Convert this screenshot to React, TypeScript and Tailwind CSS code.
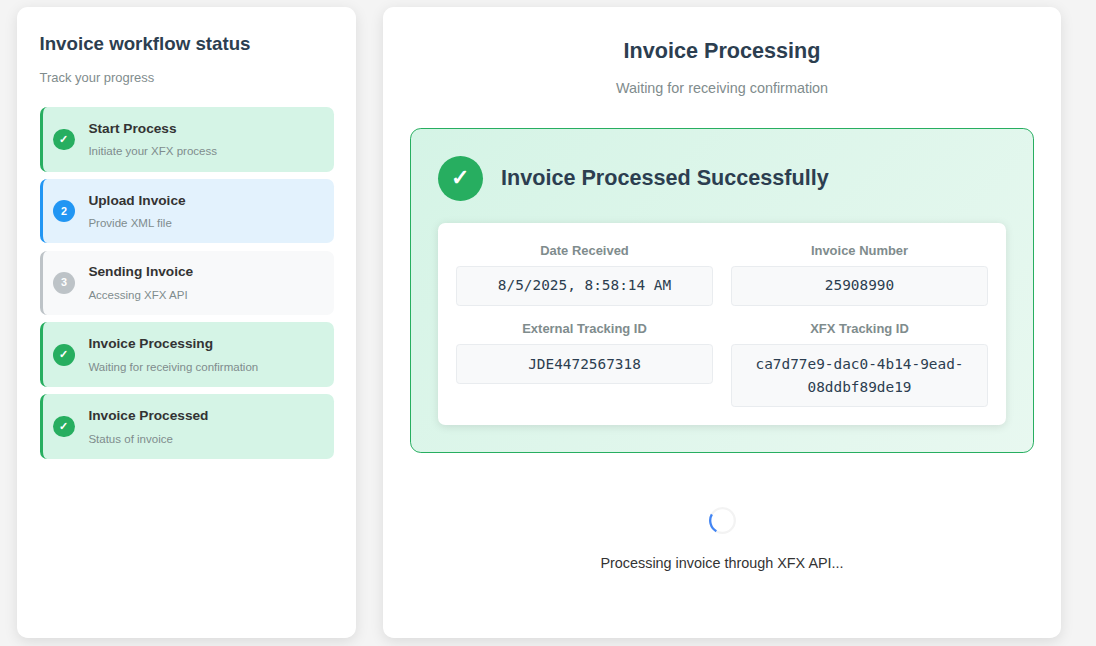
type StepState = 'done' | 'active' | 'pending';

interface Step {
  title: string;
  description: string;
  state: StepState;
}

const steps: Step[] = [
  { title: 'Start Process', description: 'Initiate your XFX process', state: 'done' },
  { title: 'Upload Invoice', description: 'Provide XML file', state: 'active' },
  { title: 'Sending Invoice', description: 'Accessing XFX API', state: 'pending' },
  { title: 'Invoice Processing', description: 'Waiting for receiving confirmation', state: 'done' },
  { title: 'Invoice Processed', description: 'Status of invoice', state: 'done' },
];

const rowStyles: Record<StepState, string> = {
  done: 'border-[#27ae60] bg-[#d5f4e6]',
  active: 'border-[#2196f3] bg-[#e3f2fd]',
  pending: 'border-[#bdc3c7] bg-[#f8f9fa]',
};

const badgeStyles: Record<StepState, string> = {
  done: 'bg-[#27ae60] pr-px',
  active: 'bg-[#2196f3]',
  pending: 'bg-[#bdc3c7]',
};

const details = [
  { label: 'Date Received', value: '8/5/2025, 8:58:14 AM' },
  { label: 'Invoice Number', value: '25908990' },
  { label: 'External Tracking ID', value: 'JDE4472567318' },
  { label: 'XFX Tracking ID', value: 'ca7d77e9-dac0-4b14-9ead-08ddbf89de19' },
];

function StepRow({ step, index }: { step: Step; index: number }) {
  return (
    <li
      className={`flex items-center gap-[13.5px] rounded-[7.2px] border-l-[3px] p-[10.8px] ${rowStyles[step.state]}`}
    >
      <span
        className={`flex size-[21.6px] shrink-0 items-center justify-center rounded-full text-[10.8px] font-bold text-white ${badgeStyles[step.state]}`}
      >
        {step.state === 'done' ? '✓' : index + 1}
      </span>
      <div>
        <h4 className="mb-[2.7px] text-[13.68px] font-bold text-[#333]">{step.title}</h4>
        <p className="text-[11.52px] text-[#7f8c8d]">{step.description}</p>
      </div>
    </li>
  );
}

function Sidebar() {
  return (
    <aside className="w-[339px] shrink-0 rounded-[10.8px] bg-white px-[22.5px] pb-[22.5px] pt-[21.8px] shadow-[0_3.6px_13.5px_rgba(0,0,0,0.1)]">
      <h2 className="text-[18.72px] font-bold text-[#2c3e50]">Invoice workflow status</h2>
      <p className="mb-[18.15px] mt-[9.3px] text-[12.96px] text-[#7f8c8d]">Track your progress</p>
      <ul className="flex flex-col gap-[7.2px]">
        {steps.map((step, index) => (
          <StepRow key={step.title} step={step} index={index} />
        ))}
      </ul>
    </aside>
  );
}

function ResultCard() {
  return (
    <section className="rounded-[10.8px] border border-[#27ae60] bg-[linear-gradient(135deg,#d5f4e6,#e8f8f0)] p-[27px]">
      <div className="mb-[22.5px] flex items-center gap-[18px]">
        <span className="flex size-[45px] items-center justify-center rounded-full bg-[#27ae60] pr-px text-[21.6px] font-bold text-white">
          ✓
        </span>
        <h3 className="text-[21.6px] font-bold text-[#2c3e50]">Invoice Processed Successfully</h3>
      </div>
      <dl className="grid grid-cols-2 items-start gap-x-[18px] gap-y-[13.6px] rounded-[7.2px] bg-white p-[18px] text-center shadow-[0_1.8px_9px_rgba(0,0,0,0.1)]">
        {details.map((item) => (
          <div key={item.label} className="flex flex-col gap-[4px]">
            <dt className="text-[12.96px] font-bold text-[#7f8c8d]">{item.label}</dt>
            <dd className="rounded-[3.6px] border border-[#e9ecef] bg-[#f8f9fa] px-[10.8px] pb-[7.4px] pt-[7.5px] font-['DejaVu_Sans_Mono',monospace] text-[14.4px] text-[#2c3e50]">
              {item.value}
            </dd>
          </div>
        ))}
      </dl>
    </section>
  );
}

function Spinner() {
  return (
    <svg className="size-[27px]" viewBox="0 0 27 27" fill="none" strokeWidth="2.3">
      <circle cx="13.5" cy="13.5" r="12.3" stroke="#f3f3f3" />
      <circle
        cx="13.5"
        cy="13.5"
        r="12.3"
        stroke="#4285f4"
        pathLength="360"
        strokeDasharray="90 270"
        transform="rotate(120 13.5 13.5)"
      />
    </svg>
  );
}

export default function App() {
  return (
    <div className="flex h-[646px] gap-[27px] overflow-hidden bg-[#f4f4f4] pb-[8px] pl-[17px] pr-[35px] pt-[7.2px] font-['Liberation_Sans',Arial,sans-serif] leading-[1.6] text-[#333]">
      <Sidebar />
      <main className="min-w-0 flex-1 rounded-[10.8px] bg-white p-[27px] shadow-[0_3.6px_13.5px_rgba(0,0,0,0.1)]">
        <header className="mb-[27.4px] text-center">
          <h1 className="mb-[8.5px] text-[21.6px] font-bold text-[#2c3e50]">Invoice Processing</h1>
          <p className="text-[14.4px] text-[#7f8c8d]">Waiting for receiving confirmation</p>
        </header>
        <ResultCard />
        <div className="mt-[54px] flex flex-col items-center gap-[18px]">
          <Spinner />
          <p className="text-[14.4px]">Processing invoice through XFX API...</p>
        </div>
      </main>
    </div>
  );
}
